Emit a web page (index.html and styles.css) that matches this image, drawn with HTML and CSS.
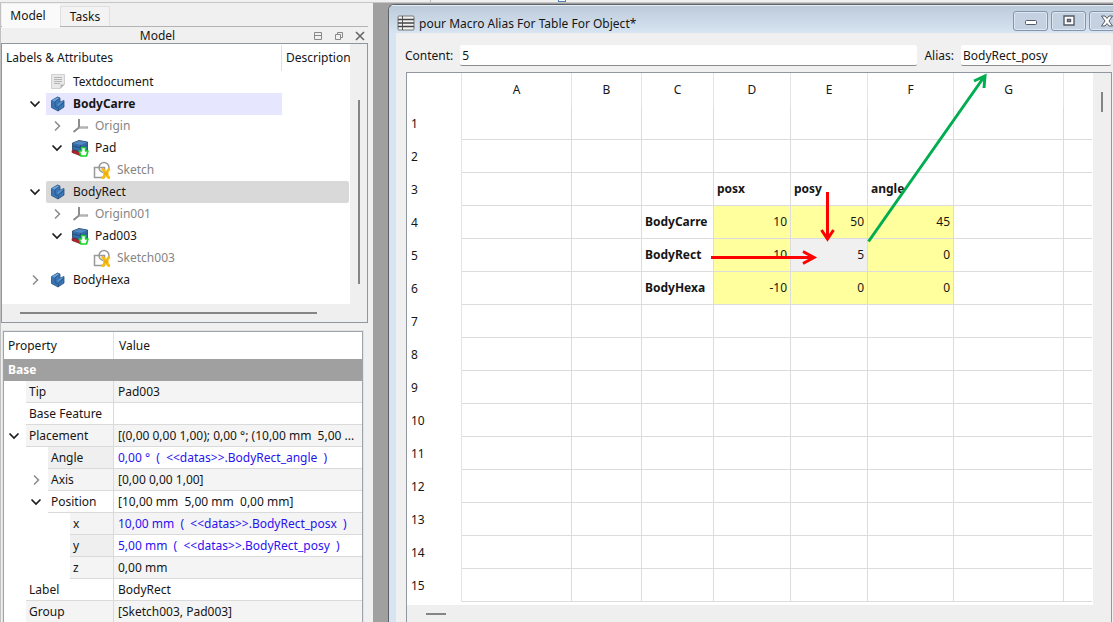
FILE: index.html
```html
<!DOCTYPE html>
<html lang="en">
<head>
<meta charset="utf-8">
<title>pour Macro Alias For Table For Object</title>
<link rel="stylesheet" href="styles.css">
</head>
<body>
<svg class="defs" aria-hidden="true">
  <symbol id="open" viewBox="0 0 12 12"><path d="M1.500 3.500 6 8l4.500-4.500" fill="none" stroke="#1c1c1c" stroke-width="1.700"/></symbol>
  <symbol id="closed" viewBox="0 0 12 12"><path d="M4 1.500 8.500 6 4 10.500" fill="none" stroke="#8a8a8a" stroke-width="1.500"/></symbol>
  <symbol id="doc" viewBox="0 0 18 18"><path d="M2.500 1.500h13v10l-4 4h-9z" fill="#e9e9e9" stroke="#d0d0d0"/><path d="M15.500 11.500h-4v4z" fill="#b5b5b5"/><path d="M5 4.500h8M5 6.500h8M5 8.500h8M5 10.500h6" stroke="#b4b4b4"/></symbol>
  <symbol id="body" viewBox="0 0 18 18"><path d="M2.500 5.500 8.500 2 11 3v4l4-1.500v6.500L9 16 2.500 12.500z" fill="#3a75b5" stroke="#24507f" stroke-width=".8"/><path d="M3 5.500 8.500 2.500 10.500 3.500 6 6.500z" fill="#6ea6dc"/><path d="M8 10 12 6.800 14.800 6 9.500 10.800z" fill="#5d97d2"/><path d="M6 7v4.500l3.500 1.500V16M6 6.500l4.500-3M9.500 12l5.500-5" fill="none" stroke="#24507f" stroke-width=".8"/></symbol>
  <symbol id="origin" viewBox="0 0 18 18"><path d="M8 2v8.500M8 10.500 17 10.500M8 10.500 2.500 15" fill="none" stroke="#8d8d8d" stroke-width="2"/><path d="M8.500 10.500h8" stroke="#b4b4b4"/></symbol>
  <symbol id="pad" viewBox="0 0 18 18"><path d="M1 11.500 6 9l11 3-7 5-9-3.500z" fill="#b3202c" stroke="#6e0f18" stroke-width=".6"/><path d="M1.500 4 8 1.500 16.500 3v8L9.500 13l-8-2.500z" fill="#356ba8" stroke="#1c3e66" stroke-width=".8"/><path d="M2 4.200 8 2l8 1.300L10 6z" fill="#5289c4"/><path d="M2 7l7.500 2L16 6.500M9.500 6v6.500" fill="none" stroke="#1e4675" stroke-width=".8"/><path d="M10.500 8.500h4v3.500h2.500l-1.500 5h-5.500L8.200 12h2.300z" fill="#fff" stroke="#16d629" stroke-width="1.600" stroke-linejoin="round"/></symbol>
  <symbol id="sketch" viewBox="0 0 18 18"><rect x="1.500" y="6.500" width="10" height="10" fill="none" stroke="#999" stroke-width="1.500"/><circle cx="11" cy="6.500" r="5" fill="none" stroke="#999" stroke-width="1.500"/><path d="M8.500 8C13 9 13 16 8.500 17M17 8c-4 1-4 8 0 9" fill="none" stroke="#f6bd16" stroke-width="2.800"/><path d="M11 12.500h4" stroke="#e8a900" stroke-width="2"/></symbol>
</svg>

<div class="toolbar-edge"><i class="toolbar-break"></i><i class="toolbar-mark"></i></div>
<main class="workspace">
  <aside class="dock">
    <nav class="tabs"><button class="tab tab-on">Model</button><button class="tab">Tasks</button></nav>
    <header class="dock-title">
      <span class="dock-name">Model</span>
      <button class="dock-btn" aria-label="Collapse"><svg viewBox="0 0 10 10"><path d="M1.500 1.500h7v7h-7zM1 4.500h8" fill="none" stroke="#888"/></svg></button>
      <button class="dock-btn" aria-label="Float"><svg viewBox="0 0 10 10"><path d="M3.500 3.500v-2h5v5h-2M1.500 3.500h5v5h-5z" fill="none" stroke="#888"/></svg></button>
      <button class="dock-btn" aria-label="Close"><svg viewBox="0 0 10 10"><path d="M1 1l8 8M9 1 1 9" stroke="#666" stroke-width="1.600"/></svg></button>
    </header>
    <section class="tree">
      <div class="tree-view">
        <div class="tree-head"><span>Labels &amp; Attributes</span><span class="tree-desc">Description</span></div>
        <div class="node l1"><span class="twist"></span><span class="item"><svg class="icon"><use href="#doc"/></svg>Textdocument</span></div>
        <div class="node l1 active"><svg class="twist"><use href="#open"/></svg><span class="item"><svg class="icon"><use href="#body"/></svg>BodyCarre</span></div>
        <div class="node l2 dim"><svg class="twist"><use href="#closed"/></svg><span class="item"><svg class="icon"><use href="#origin"/></svg>Origin</span></div>
        <div class="node l2"><svg class="twist"><use href="#open"/></svg><span class="item"><svg class="icon"><use href="#pad"/></svg>Pad</span></div>
        <div class="node l3 dim"><span class="twist"></span><span class="item"><svg class="icon"><use href="#sketch"/></svg>Sketch</span></div>
        <div class="node l1 selected"><svg class="twist"><use href="#open"/></svg><span class="item"><svg class="icon"><use href="#body"/></svg>BodyRect</span></div>
        <div class="node l2 dim"><svg class="twist"><use href="#closed"/></svg><span class="item"><svg class="icon"><use href="#origin"/></svg>Origin001</span></div>
        <div class="node l2"><svg class="twist"><use href="#open"/></svg><span class="item"><svg class="icon"><use href="#pad"/></svg>Pad003</span></div>
        <div class="node l3 dim"><span class="twist"></span><span class="item"><svg class="icon"><use href="#sketch"/></svg>Sketch003</span></div>
        <div class="node l1"><svg class="twist"><use href="#closed"/></svg><span class="item"><svg class="icon"><use href="#body"/></svg>BodyHexa</span></div>
      </div>
      <div class="vbar tree-vbar"><i></i></div>
      <div class="hbar tree-hbar"><i></i></div>
    </section>
    <section class="props">
      <table class="prop-table">
        <colgroup><col class="prop-col"><col></colgroup>
        <thead><tr><th>Property</th><th>Value</th></tr></thead>
        <tbody>
          <tr class="group"><th colspan="2">Base</th></tr>
          <tr class="alt"><td class="p1"><div>Tip</div></td><td>Pad003</td></tr>
          <tr><td class="p1"><div>Base Feature</div></td><td></td></tr>
          <tr class="alt"><td class="p1"><div><svg class="arrow"><use href="#open"/></svg>Placement</div></td><td>[(0,00 0,00 1,00); 0,00 °; (10,00 mm&nbsp; 5,00 ...</td></tr>
          <tr class="tint"><td class="p2"><div>Angle</div></td><td class="expr">0,00 °&nbsp; (&nbsp; &lt;&lt;datas&gt;&gt;.BodyRect_angle&nbsp; )</td></tr>
          <tr class="alt"><td class="p2"><div><svg class="arrow"><use href="#closed"/></svg>Axis</div></td><td>[0,00 0,00 1,00]</td></tr>
          <tr><td class="p2"><div><svg class="arrow"><use href="#open"/></svg>Position</div></td><td>[10,00 mm&nbsp; 5,00 mm&nbsp; 0,00 mm]</td></tr>
          <tr class="alt"><td class="p3"><div>x</div></td><td class="expr">10,00 mm&nbsp; (&nbsp; &lt;&lt;datas&gt;&gt;.BodyRect_posx&nbsp; )</td></tr>
          <tr class="tint"><td class="p3"><div>y</div></td><td class="expr">5,00 mm&nbsp; (&nbsp; &lt;&lt;datas&gt;&gt;.BodyRect_posy&nbsp; )</td></tr>
          <tr class="alt"><td class="p3"><div>z</div></td><td>0,00 mm</td></tr>
          <tr><td class="p1"><div>Label</div></td><td>BodyRect</td></tr>
          <tr class="alt"><td class="p1"><div>Group</div></td><td>[Sketch003, Pad003]</td></tr>
        </tbody>
      </table>
    </section>
  </aside>

  <section class="window">
    <header class="titlebar">
      <svg class="sheet-icon" viewBox="0 0 18 16"><rect x="1" y="1" width="16" height="14" rx="1" fill="#f4f4f4" stroke="#777"/><path d="M1 4.500h16M1 8h16M1 11.500h16" stroke="#444" stroke-width="1.400"/><path d="M5.500 1v14" stroke="#555"/></svg>
      <h1>pour Macro Alias For Table For Object*</h1>
      <button class="win-btn" aria-label="Minimize"><svg viewBox="0 0 16 12"><rect x="2.500" y="5.500" width="11" height="4" rx="1" fill="#fff" stroke="#555b66"/></svg></button>
      <button class="win-btn" aria-label="Maximize"><svg viewBox="0 0 16 12"><path d="M3 1h10v9H3zM6.500 4.500v2h3v-2z" fill="#fff" stroke="#555b66" stroke-width="1.400" fill-rule="evenodd"/></svg></button>
      <button class="win-btn" aria-label="Close"><svg viewBox="0 0 16 12"><path d="M2.500 1h3.500l2 2.500L10 1h3.500l-3.500 5 3.500 5H10L8 8.500 6 11H2.500L6 6z" fill="#fff" stroke="#555b66"/></svg></button>
    </header>
    <div class="client">
      <div class="fields">
        <label for="content">Content:</label><input id="content" class="content" value="5">
        <label for="alias">Alias:</label><input id="alias" class="alias" value="BodyRect_posy">
      </div>
      <div class="sheet">
        <div class="grid-area">
          <table class="grid">
            <colgroup><col class="c-num"><col class="c-wide"><col class="c-b"><col class="c-c"><col class="c-de"><col class="c-de"><col class="c-f"><col class="c-wide"><col></colgroup>
            <thead><tr><th></th><th>A</th><th>B</th><th>C</th><th>D</th><th>E</th><th>F</th><th>G</th><th></th></tr></thead>
            <tbody>
              <tr><th>1</th><td></td><td></td><td></td><td></td><td></td><td></td><td></td><td></td></tr>
              <tr><th>2</th><td></td><td></td><td></td><td></td><td></td><td></td><td></td><td></td></tr>
              <tr><th>3</th><td></td><td></td><td></td><td class="name">posx</td><td class="name">posy</td><td class="name">angle</td><td></td><td></td></tr>
              <tr><th>4</th><td></td><td></td><td class="name">BodyCarre</td><td class="val">10</td><td class="val">50</td><td class="val">45</td><td></td><td></td></tr>
              <tr><th>5</th><td></td><td></td><td class="name">BodyRect</td><td class="val">10</td><td class="val current">5</td><td class="val">0</td><td></td><td></td></tr>
              <tr><th>6</th><td></td><td></td><td class="name">BodyHexa</td><td class="val">-10</td><td class="val">0</td><td class="val">0</td><td></td><td></td></tr>
              <tr><th>7</th><td></td><td></td><td></td><td></td><td></td><td></td><td></td><td></td></tr>
              <tr><th>8</th><td></td><td></td><td></td><td></td><td></td><td></td><td></td><td></td></tr>
              <tr><th>9</th><td></td><td></td><td></td><td></td><td></td><td></td><td></td><td></td></tr>
              <tr><th>10</th><td></td><td></td><td></td><td></td><td></td><td></td><td></td><td></td></tr>
              <tr><th>11</th><td></td><td></td><td></td><td></td><td></td><td></td><td></td><td></td></tr>
              <tr><th>12</th><td></td><td></td><td></td><td></td><td></td><td></td><td></td><td></td></tr>
              <tr><th>13</th><td></td><td></td><td></td><td></td><td></td><td></td><td></td><td></td></tr>
              <tr><th>14</th><td></td><td></td><td></td><td></td><td></td><td></td><td></td><td></td></tr>
              <tr><th>15</th><td></td><td></td><td></td><td></td><td></td><td></td><td></td><td></td></tr>
            </tbody>
          </table>
          <svg class="notes" width="620" height="220" viewBox="0 0 620 220" fill="none" stroke-width="3">
            <path d="M420.500 119v46M414.500 157l6 9 6-9" stroke="#f00"/>
            <path d="M304 184.500h103M396 178.500l11 6-11 6" stroke="#f00"/>
            <path d="M461.500 168.500 577 4M567 8l11-5-1 12" stroke="#00ae50"/>
          </svg>
        </div>
        <div class="vbar sheet-vbar"><i></i></div>
        <div class="hbar sheet-hbar"><i></i></div>
      </div>
    </div>
  </section>
</main>
</body>
</html>
```

FILE: styles.css
```css
* { box-sizing: border-box; }
body {
  margin: 0;
  height: 100vh;
  display: flex;
  flex-direction: column;
  overflow: hidden;
  background: #f0f0f0;
  color: #161616;
  font: 12px/16px "Noto Sans", "Open Sans", sans-serif;
}
button, input { font: inherit; color: inherit; }
.defs { position: absolute; width: 0; height: 0; }

/* lower edge of the toolbar */
.toolbar-edge { flex: none; height: 3px; display: flex; border-bottom: 1px solid #c6c6c6; }
.toolbar-break { width: 1px; margin-left: 430px; background: #bbb; }
.toolbar-mark { width: 8px; margin-left: 127px; border: 1px solid #4f7fb0; border-top: 0; background: #fff; }

.workspace { flex: 1; min-height: 0; display: flex; background: #a0a0a0; }

/* left dock */
.dock { flex: none; width: 373px; display: flex; flex-direction: column; background: #f0f0f0; border-left: 1px solid #c0c0c0; }
.tabs { flex: none; display: flex; height: 24px; padding: 1px 0 0 1px; margin-right: 5px; border-bottom: 1px solid #b4b4b4; }
.tab { width: 50px; height: 20px; margin-top: 2px; padding: 0; border: 1px solid #e0e0e0; border-bottom: 0; background: #f3f3f3; }
.tab-on { width: 58px; height: 24px; margin: 0; padding-right: 6px; border: 0; background: #fafafa; }
.dock-title { flex: none; height: 16px; display: flex; align-items: center; gap: 11px; padding: 1px 8px 0 12px; }
.dock-name { flex: 1; text-align: center; }
.dock-btn { width: 10px; height: 10px; padding: 0; border: 0; background: none; }
.dock-btn svg { display: block; width: 10px; height: 10px; }

.tree {
  flex: none;
  margin-right: 5px;
  display: grid;
  grid-template-columns: 1fr 17px;
  grid-template-rows: 1fr 18px;
  border: 1px solid #8f969e;
}
.tree-view { padding: 1px 0 13px; background: #fff; overflow: hidden; }
.tree-head { display: grid; grid-template-columns: 279px 1fr; height: 26px; line-height: 25px; white-space: nowrap; }
.tree-head span { padding-left: 4px; overflow: hidden; }
.tree-desc { border-left: 1px solid #e0e0e0; }
.node { display: flex; height: 22px; align-items: center; }
.l1 { padding-left: 22px; }
.l2 { padding-left: 44px; }
.l3 { padding-left: 66px; }
.twist { flex: none; width: 22px; height: 12px; padding: 0 4px; }
.item { flex: 1; height: 22px; display: flex; align-items: center; gap: 6px; padding-left: 3px; }
.icon { width: 18px; height: 18px; }
.dim { color: #858585; }
.active .item { margin-right: 68px; background: #e6e6ff; font-weight: 700; }
.selected .item { margin-right: 1px; background: #d9d9d9; border-radius: 2px; }

.vbar, .hbar { display: flex; background: #efefef; }
.vbar i, .hbar i { display: block; background: #858585; }
.vbar { justify-content: center; }
.vbar i { width: 2px; }
.hbar { grid-column: 1 / -1; align-items: center; }
.hbar i { height: 2px; }
.tree-vbar { padding: 56px 0 20px; }
.tree-hbar i { width: 297px; margin-left: 18px; }

.props { flex: 1; min-height: 0; margin: 8px 10px 0 2px; border: 1px solid #9da3aa; border-bottom: 0; background: #fff; overflow: hidden; outline: 1px solid #e3e3e3; }
.prop-table { width: 100%; table-layout: fixed; border-collapse: separate; border-spacing: 0; }
.prop-col { width: 110px; }
.prop-table th, .prop-table td { padding: 0 0 0 4px; text-align: left; font-weight: 400; white-space: nowrap; overflow: hidden; }
.prop-table thead th { height: 27px; border-right: 1px solid #e2e2e2; }
.prop-table thead th + th { padding-left: 5px; border: 0; }
.prop-table .group th { height: 22px; background: #a0a0a0; color: #fff; font-weight: 700; }
.prop-table td { height: 22px; border-bottom: 1px solid #dadada; }
.prop-table td:first-child { border: 0; }
.prop-table td div { height: 22px; display: flex; align-items: center; padding-left: 3px; border: 1px solid #dadada; border-width: 0 1px 1px 0; }
.prop-table td.p1 { padding-left: 22px; }
.prop-table td.p2 { padding-left: 44px; }
.prop-table td.p3 { padding-left: 66px; }
.alt td + td, .alt div { background: #f4f4f4; }
.tint div { background: #efefef; }
.expr { color: #2a12f0; }
.arrow { flex: none; width: 12px; height: 12px; margin: 0 9px 0 -21px; }

/* spreadsheet window */
.window { flex: 1; min-width: 0; margin: 1px 0 0 15px; display: flex; flex-direction: column; border: solid #5d6167; border-width: 1px 0 0 1px; border-radius: 6px 0 0 0; background: #d7e4f2; overflow: hidden; }
.titlebar { flex: none; height: 28px; display: flex; align-items: flex-start; gap: 3px; padding: 5px 0 0 8px; background: linear-gradient(#bccbda, #d7e4f2); border-top: 1px solid #e6eef6; }
.sheet-icon { width: 18px; height: 16px; margin-top: 4px; }
.titlebar h1 { flex: 1; margin: 5px 0 0 1px; font: inherit; white-space: nowrap; }
.win-btn { flex: none; width: 35px; height: 20px; padding: 0; border: 1px solid #8394ab; border-radius: 3px; background: #c3d1e0; box-shadow: inset 0 0 0 1px #dce7f2; display: grid; place-items: center; }
.win-btn:last-child { margin-right: -11px; }
.win-btn svg { width: 16px; height: 12px; }
.client { flex: 1; min-height: 0; margin-left: 7px; display: flex; flex-direction: column; background: #f0f0f0; }
.fields { flex: none; display: flex; align-items: center; gap: 7px; padding: 12px 2px 6px 9px; }
.fields input { height: 21px; padding: 0 2px; border: 0; border-bottom: 1px solid #8d8d8d; border-radius: 2px; background: #fff; outline: 0; }
.content { flex: 1; min-width: 0; }
.alias { width: 150px; }
.sheet { flex: 1; min-height: 0; margin-left: 10px; margin-right: 1px; display: grid; grid-template-columns: 1fr 18px; grid-template-rows: 1fr 17px; border: 1px solid #9097a0; border-bottom: 0; }
.grid-area { position: relative; min-height: 0; padding: 0 1px 2px 0; background: #fff; }
.grid { width: 100%; table-layout: fixed; border-collapse: separate; border-spacing: 0; }
.c-num { width: 55px; }
.c-wide { width: 110px; }
.c-b { width: 70px; }
.c-c { width: 72px; }
.c-de { width: 77px; }
.c-f { width: 86px; }
.grid th { padding: 0; font-weight: 400; border-right: 1px solid #e4e4e4; }
.grid thead th { height: 34px; }
.grid tbody th { height: 33px; padding-left: 4px; text-align: left; }
.grid td { padding: 0 3px; border: 1px solid #dcdcdc; border-width: 0 1px 1px 0; white-space: nowrap; }
.grid th:last-child, .grid td:last-child { border-right: 0; }
.name { font-weight: 700; }
.val { text-align: right; background: #ffff9e; }
.current { background: #f0f0f0; }
.notes { position: absolute; left: 0; top: 0; pointer-events: none; }
.sheet-vbar { padding: 19px 0; }
.sheet-vbar i { height: 20px; }
.sheet-hbar i { width: 20px; margin-left: 19px; }
```
